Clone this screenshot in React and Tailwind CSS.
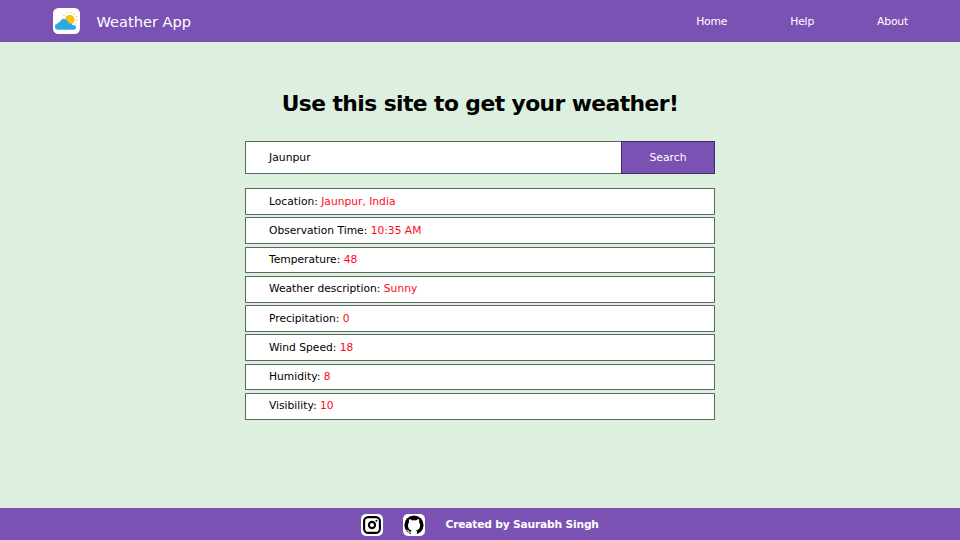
const rows = [
  ["Location", "Jaunpur, India"],
  ["Observation Time", "10:35 AM"],
  ["Temperature", "48"],
  ["Weather description", "Sunny"],
  ["Precipitation", "0"],
  ["Wind Speed", "18"],
  ["Humidity", "8"],
  ["Visibility", "10"],
];

function WeatherLogo() {
  return (
    <svg viewBox="0 0 27 26" className="h-[26px] w-[27px]" aria-hidden="true">
      <rect width="27" height="26" rx="5.5" fill="#fff" />
      <circle cx="16.8" cy="11.6" r="4.8" fill="#fcc018" />
      <circle
        cx="16.8"
        cy="11.6"
        r="7.2"
        fill="none"
        stroke="#fccb55"
        strokeWidth="1.3"
        strokeDasharray="1.3 2.47"
      />
      <path
        d="M4.6 21.8a3.1 3.1 0 0 1-.7-6c1-.7 1.700-1.500 2.900-1.700.8-2.500 3.200-3.500 5.300-2.800 2 .6 3.200 2.200 3.700 4.100 1.900-.3 2.900.5 3.500 1.700 2.400-.1 4 1 3.800 2.700-.1 1.300-1 2-2.300 2z"
        fill="#29abe2"
      />
    </svg>
  );
}

function InstagramIcon() {
  return (
    <svg viewBox="0 0 18 18" className="size-[18px]" fill="none" stroke="#000" aria-hidden="true">
      <rect x="1.1" y="1.1" width="15.8" height="15.8" rx="4.2" strokeWidth="2.1" />
      <circle cx="9" cy="9" r="3.1" strokeWidth="2.1" />
      <circle cx="13.4" cy="4.7" r="1" fill="#000" stroke="none" />
    </svg>
  );
}

function GithubIcon() {
  return (
    <svg viewBox="0 0 20 20" className="size-[20px]" aria-hidden="true">
      <circle cx="10" cy="10" r="9.6" fill="#000" />
      <path
        d="M6.900 20v-2.200c-2.300.4-2.900-.9-3.300-1.700-.2-.5-.8-.9-1.200-1.200 1.500-.3 2.100.9 2.700 1.500.6.600 1.300.5 1.900.2.100-.6.400-1 .700-1.300-2.600-.5-3.700-2.300-3.700-4.900 0-1.300.3-2.300 1-3-.2-.9-.2-2.100.2-3.200 1.200 0 2.200.6 3 1.200 1.200-.3 2.500-.3 3.700 0 .8-.6 1.800-1.200 3-1.200.4 1.100.4 2.300.2 3.200.7.700 1 1.700 1 3 0 2.600-1.200 4.400-3.800 4.900.5.500.8 1.300.8 2.200V20z"
        fill="#fff"
      />
    </svg>
  );
}

export default function App() {
  return (
    <div className="flex h-[540px] w-[960px] flex-col overflow-hidden bg-[#ddf0df] font-['DejaVu_Sans',sans-serif] text-black">
      <header className="flex h-[42px] shrink-0 items-center bg-[#7952b3] pl-[53px] pr-[52px] text-white">
        <WeatherLogo />
        <span className="ml-[16.5px] pt-[2px] text-[14.6px] whitespace-nowrap">Weather App</span>
        <nav className="ml-auto flex gap-[63px] pt-[2px] text-[10.8px] tracking-[-0.2px]">
          <a>Home</a>
          <a>Help</a>
          <a>About</a>
        </nav>
      </header>

      <main className="flex grow flex-col items-center">
        <h1 className="mt-[46px] h-[32px] text-[21.8px] leading-[32px] font-bold tracking-[-0.56px] whitespace-nowrap">
          Use this site to get your weather!
        </h1>
        <div className="mt-[21px] flex h-[33px] w-[470px] border border-[#5c675e] bg-white text-[10.8px]">
          <div className="flex grow items-center pt-[2px] pl-[23px]">Jaunpur</div>
          <button className="-m-px w-[94px] border border-[#402c60] bg-[#7952b3] pt-[2px] text-white">
            Search
          </button>
        </div>
        <ul className="mt-[14.25px] flex w-[470px] flex-col gap-[2.47px] text-[10.7px] leading-[16px]">
          {rows.map(([label, value]) => (
            <li
              key={label}
              className="flex h-[26.75px] items-center border border-[#5c675e] bg-white pl-[23px] whitespace-pre"
            >
              <span>{label}: </span>
              <span className="text-[#ff0a18]">{value}</span>
            </li>
          ))}
        </ul>
      </main>

      <footer className="flex h-[32px] shrink-0 items-center bg-[#7952b3] pt-px pl-[361px] text-white">
        <span className="flex size-[22px] items-center justify-center rounded-[5px] bg-white">
          <InstagramIcon />
        </span>
        <span className="ml-[20px] flex size-[22px] items-center justify-center rounded-[5px] bg-white">
          <GithubIcon />
        </span>
        <span className="ml-[20.5px] pt-px text-[10.7px] font-bold tracking-[-0.19px] whitespace-nowrap">
          Created by Saurabh Singh
        </span>
      </footer>
    </div>
  );
}
